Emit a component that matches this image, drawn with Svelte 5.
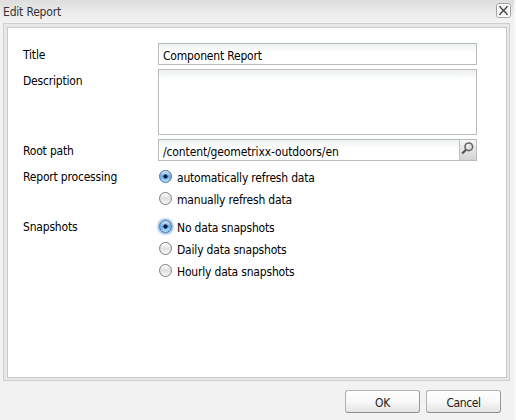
<script>
  const groups = [
    { label: 'Report processing', top: 4, options: [
      { text: 'automatically refresh data', on: true },
      { text: 'manually refresh data' }
    ] },
    { label: 'Snapshots', top: 6, options: [
      { text: 'No data snapshots', on: true, focus: true },
      { text: 'Daily data snapshots' },
      { text: 'Hourly data snapshots' }
    ] }
  ];
</script>

<div class="window">
  <header>
    <span class="title">Edit Report</span>
    <button class="close" aria-label="Close">
      <svg width="15" height="15" viewBox="0 0 15 15">
        <rect x=".5" y=".5" width="14" height="14" rx="2.5" fill="#f4f4f4" stroke="#a3a3a3" />
        <rect x="1.5" y="1.5" width="12" height="12" rx="1.5" fill="none" stroke="#fff" />
        <path d="M4 4L11 11M11 4L4 11" stroke="#444" stroke-width="1.4" />
        <path d="M3 3.5h2M10 3.5h2M3 11.5h2M10 11.5h2" stroke="#666" stroke-width="1" />
      </svg>
    </button>
  </header>
  <main>
    <form>
      <div class="row"><span class="label">Title</span><div class="field">Component Report</div></div>
      <div class="row"><span class="label">Description</span><div class="field area"></div></div>
      <div class="row">
        <span class="label">Root path</span>
        <div class="field path">
          <span>/content/geometrixx-outdoors/en</span>
          <span class="trigger">
            <svg width="17" height="20" viewBox="0 0 17 20">
              <circle cx="9.8" cy="6.8" r="3.8" fill="#e4e4e4" stroke="#666" stroke-width="1.6" />
              <path d="M7.9 6.6a2 2 0 0 1 2-1.8" fill="none" stroke="#fff" />
              <path d="M7 9.7L3.2 13.6" stroke="#555" stroke-width="2.2" />
            </svg>
          </span>
        </div>
      </div>
      {#each groups as g}
        <div class="row group" style="margin-top:{g.top}px">
          <span class="label">{g.label}</span>
          <div class="options">
            {#each g.options as o}
              <label>
                <i class="radio" class:on={o.on} class:focus={o.focus}></i>
                <span>{o.text}</span>
              </label>
            {/each}
          </div>
        </div>
      {/each}
    </form>
  </main>
  <footer><button class="btn">OK</button><button class="btn">Cancel</button></footer>
</div>

<style>
  :global(body) { background: #f2f2f2; }
  .window {
    box-sizing: border-box;
    width: 516px;
    height: 420px;
    display: flex;
    flex-direction: column;
    background: linear-gradient(#dedede, #f2f2f2 20px);
    border-right: 2px solid #f8f8f8;
    font: 12px/16px "DejaVu Sans Condensed", "DejaVu Sans", sans-serif;
    font-stretch: condensed;
    letter-spacing: -0.19px;
    color: #000;
  }
  header { height: 23px; display: flex; justify-content: space-between; padding: 0 3px; box-sizing: border-box; }
  .title { padding-top: 4px; color: #333; }
  .close { margin: 3px 0 0; padding: 0; width: 15px; height: 15px; border: 0; background: none; }
  .close svg { display: block; }
  main {
    box-sizing: border-box;
    width: 507px;
    height: 358px;
    margin-left: 3px;
    padding: 3px 2px 2px 3px;
    border: 1px solid #cfcfcf;
    background: #e8e8e8;
  }
  form { box-sizing: border-box; height: 100%; border: 1px solid #c8c8c8; background: #fff; padding: 15px 0 0 15px; }
  .row { display: flex; margin-bottom: 4px; }
  .label { width: 135px; padding-top: 4px; flex: none; }
  .field {
    box-sizing: border-box;
    width: 319px;
    height: 22px;
    border: 1px solid #b9bbbd;
    background: linear-gradient(#edf1f1, #fff 9px);
    padding: 4px 0 0 4px;
    white-space: nowrap;
  }
  .area { height: 66px; }
  .path { display: flex; justify-content: space-between; letter-spacing: -0.12px; }
  .trigger { width: 17px; height: 20px; margin-top: -4px; background: linear-gradient(#f5f5f5, #d3d3d3); border-left: 1px solid #c0c0c0; box-sizing: border-box; }
  .trigger svg { display: block; margin-left: -1px; }
  .group { margin-bottom: 0; }
  .options { display: flex; flex-direction: column; }
  label { display: flex; height: 22px; align-items: flex-start; }
  .group label span { padding: 5px 0 0 5px; }
  .radio {
    box-sizing: border-box;
    width: 13px;
    height: 13px;
    margin: 5px 0 0 1px;
    border: 1px solid #7d7d7d;
    border-radius: 50%;
    background: linear-gradient(#fff, #e0e0e0 50%, #fafafa);
  }
  .on {
    border-color: #476c9e;
    background: radial-gradient(circle at 50% 50%, #0b1b35 0 1.7px, transparent 2.5px), linear-gradient(#d7e9fa, #6caae8 50%, #b4e2ff);
  }
  .focus { box-shadow: 0 0 2px 1.5px #8fbbe4; }
  footer { display: flex; gap: 6px; padding: 9px 0 0 345px; }
  .btn {
    box-sizing: border-box;
    width: 75px;
    height: 23px;
    margin: 0;
    padding: 2px 0 0;
    border: 1px solid #b2b2b2;
    border-bottom-color: #8e8e8e;
    border-right-color: #999;
    border-radius: 3px;
    background: linear-gradient(#fff, #f8f8f8 50%, #e4e4e4);
    font: inherit;
    letter-spacing: -0.4px;
    color: #222;
  }
</style>
